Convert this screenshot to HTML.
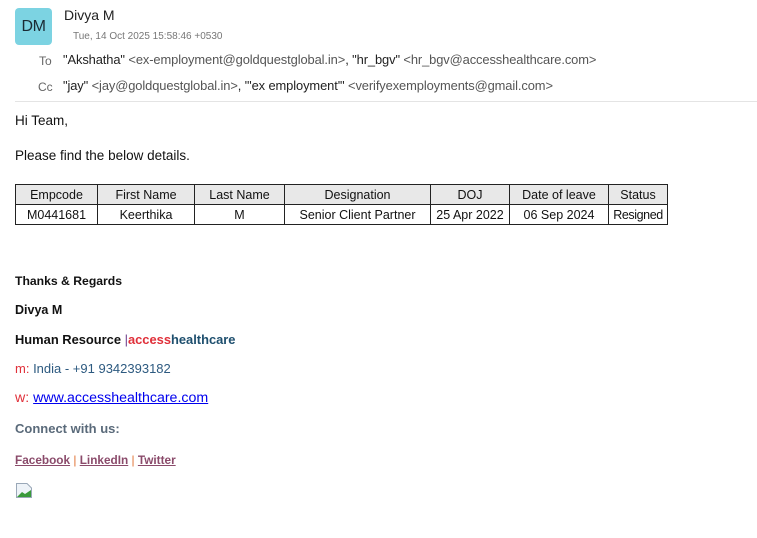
<!DOCTYPE html>
<html><head><meta charset="utf-8"><style>
*{margin:0;padding:0;box-sizing:border-box}
body{width:757px;height:538px;background:#fff;font-family:"Liberation Sans",sans-serif;position:relative;overflow:hidden;color:#222}
.a{position:absolute;white-space:nowrap}
.av{left:15px;top:8px;width:37px;height:37px;background:#7cd3e2;border-radius:4px;font-size:16px;color:#1a2a33;text-align:center;line-height:37px;letter-spacing:-0.5px}
.g{color:#555}
.lbl{color:#666;font-size:12px}
table{position:absolute;left:15px;top:184px;border-collapse:collapse;font-size:12.5px;color:#111;table-layout:fixed;width:652px}
td{border:1px solid #222;height:20px;padding:0;text-align:center;overflow:hidden}
tr.h td{background:#e8e8e8}
.sig{font-family:"Liberation Sans",sans-serif;font-size:12.5px}
</style></head><body>
<div class="a av">DM</div>
<div class="a" style="left:64px;top:7px;font-size:14px;color:#222">Divya M</div>
<div class="a" style="left:73px;top:31px;font-size:10px;color:#777">Tue, 14 Oct 2025 15:58:46 +0530</div>
<div class="a lbl" style="left:39px;top:54px">To</div>
<div class="a" style="left:63px;top:52px;font-size:12.9px;letter-spacing:-0.1px">"Akshatha" <span class="g">&lt;ex-employment@goldquestglobal.in&gt;</span>, "hr_bgv" <span class="g">&lt;hr_bgv@accesshealthcare.com&gt;</span></div>
<div class="a lbl" style="left:38px;top:80px">Cc</div>
<div class="a" style="left:63px;top:78px;font-size:12.9px;letter-spacing:-0.1px">"jay" <span class="g">&lt;jay@goldquestglobal.in&gt;</span>, "'ex employment'" <span class="g">&lt;verifyexemployments@gmail.com&gt;</span></div>
<div class="a" style="left:15px;top:101px;width:742px;height:1px;background:#e4e4e4"></div>
<div class="a" style="left:15px;top:113px;font-size:13.5px;color:#111">Hi Team,</div>
<div class="a" style="left:15px;top:148px;font-size:13.5px;color:#111">Please find the below details.</div>
<table>
<colgroup><col style="width:82px"><col style="width:97px"><col style="width:90px"><col style="width:146px"><col style="width:79px"><col style="width:99px"><col style="width:59px"></colgroup>
<tr class="h"><td>Empcode</td><td>First Name</td><td>Last Name</td><td>Designation</td><td>DOJ</td><td>Date of leave</td><td>Status</td></tr>
<tr><td>M0441681</td><td>Keerthika</td><td>M</td><td>Senior Client Partner</td><td>25 Apr 2022</td><td>06 Sep 2024</td><td style="letter-spacing:-0.4px">Resigned</td></tr>
</table>
<div class="a sig" style="left:15px;top:274px;font-weight:bold;color:#111;font-size:12.2px">Thanks &amp; Regards</div>
<div class="a sig" style="left:15px;top:303px;font-weight:bold;color:#111">Divya M</div>
<div class="a sig" style="left:15px;top:332px;font-weight:bold;color:#111;font-size:12.9px">Human Resource <span style="font-weight:normal;color:#6a3a8a">|</span><span style="color:#e0303a">access</span><span style="color:#1e4f6e">healthcare</span></div>
<div class="a sig" style="left:15px;top:361px;color:#2d5a80;font-size:13px"><span style="color:#e0303a">m:</span> India - +91 9342393182</div>
<div class="a sig" style="left:15px;top:390px;font-size:14.2px"><span style="color:#e0303a">w:</span> <span style="color:#0000ee;text-decoration:underline">www.accesshealthcare.com</span></div>
<div class="a sig" style="left:15px;top:421px;color:#5a6a7a;font-weight:bold;font-size:13px">Connect with us:</div>
<div class="a sig" style="left:15px;top:453px;font-size:11.8px;font-weight:bold;color:#8a4a6a"><span style="text-decoration:underline">Facebook</span> <span style="color:#e07030;font-weight:normal">|</span> <span style="text-decoration:underline">LinkedIn</span> <span style="color:#e07030;font-weight:normal">|</span> <span style="text-decoration:underline">Twitter</span></div>
<svg class="a" style="left:16px;top:483px" width="16" height="15" viewBox="0 0 16 15"><path d="M0.5 0.5H11L15.5 5V14.5H0.5Z" fill="#eef3f8" stroke="#9aa8b8"/><path d="M1 14L6 9L9 11L15 7V14Z" fill="#3a9a3a"/></svg>
</body></html>
